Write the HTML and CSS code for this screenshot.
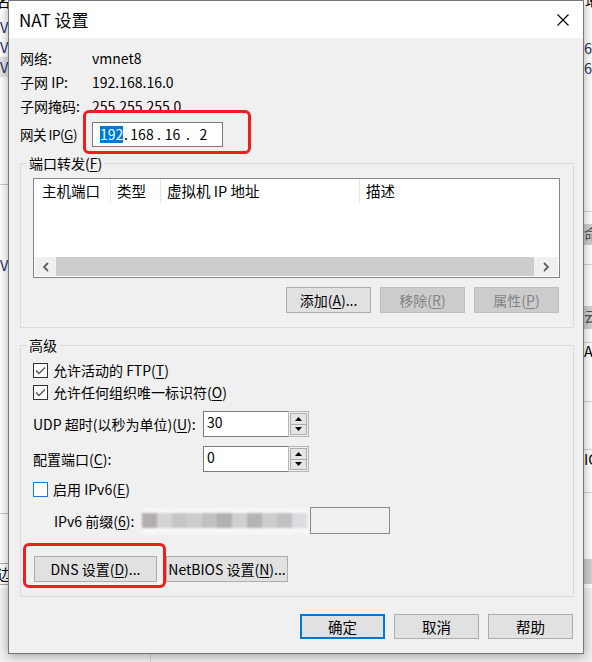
FILE: index.html
```html
<!DOCTYPE html>
<html lang="zh-CN">
<head>
<meta charset="utf-8">
<title>NAT 设置</title>
<link rel="stylesheet" href="styles.css">
</head>
<body>
<div class="desktop">
  <div class="backwin">
    <div class="frag f-ming">名</div>
    <div class="frag f-v1">V</div>
    <div class="frag f-v2">V</div>
    <div class="frag f-hl"></div>
    <div class="frag f-v3">V</div>
    <div class="frag f-line l-209"></div>
    <div class="frag f-v4">V</div>
    <div class="frag f-line l-513"></div>
    <div class="frag f-bian">边</div>
    <div class="frag f-di">地</div>
    <div class="frag f-68a">68</div>
    <div class="frag f-68b">68</div>
    <div class="frag f-rline r-211"></div>
    <div class="frag f-rbox rb-224">命</div>
    <div class="frag f-rline r-264"></div>
    <div class="frag f-rbox rb-306">云</div>
    <div class="frag f-rline r-342"></div>
    <div class="frag f-at">AT</div>
    <div class="frag f-rline r-401"></div>
    <div class="frag f-rline r-449"></div>
    <div class="frag f-ic">IC</div>
    <div class="frag f-rline r-492"></div>
    <div class="frag f-rbox rb-559"></div>
    <div class="frag f-bottom"></div>
  </div>

  <div class="dialog">
    <div class="titlebar">
      <span class="title">NAT 设置</span>
      <svg class="close" width="12" height="12" viewBox="0 0 12 12"><path d="M0.5 0.5 L11.5 11.5 M11.5 0.5 L0.5 11.5" stroke="#000" stroke-width="1.1" fill="none"/></svg>
    </div>
    <div class="content">
      <div class="row r1"><span class="lbl">网络:</span><span>vmnet8</span></div>
      <div class="row"><span class="lbl">子网 IP:</span><span>192.168.16.0</span></div>
      <div class="row"><span class="lbl">子网掩码:</span><span>255.255.255.0</span></div>
      <div class="row gw">
        <span class="lbl gwl">网关 IP(<u>G</u>)</span>
        <div class="ipbox">
          <span class="seg o1"><span class="sel">192</span></span>
          <span class="seg d1">.</span>
          <span class="seg o2">168</span>
          <span class="seg d2">.</span>
          <span class="seg o3">16</span>
          <span class="seg d3">.</span>
          <span class="seg o4">2</span>
        </div>
      </div>

      <div class="group g1">
        <div class="legend">端口转发(<u>F</u>)</div>
        <div class="list">
          <div class="lhead">
            <div class="col c1">主机端口</div>
            <div class="col c2">类型</div>
            <div class="col c3">虚拟机 IP 地址</div>
            <div class="col c4">描述</div>
          </div>
          <div class="lbody"></div>
          <div class="hscroll">
            <div class="sb-btn sb-left"><svg width="8" height="10" viewBox="0 0 8 10"><path d="M6 1 L2 5 L6 9" fill="none" stroke="#606060" stroke-width="1.8"/></svg></div>
            <div class="sb-thumb"></div>
            <div class="sb-btn sb-right"><svg width="8" height="10" viewBox="0 0 8 10"><path d="M2 1 L6 5 L2 9" fill="none" stroke="#606060" stroke-width="1.8"/></svg></div>
          </div>
        </div>
        <div class="btnrow">
          <button class="btn">添加(<u>A</u>)...</button>
          <button class="btn dis">移除(<u>R</u>)</button>
          <button class="btn dis">属性(<u>P</u>)</button>
        </div>
      </div>

      <div class="group g2">
        <div class="legend">高级</div>
        <div class="cbrow cb1">
          <svg class="cb" width="15" height="15" viewBox="0 0 15 15"><rect x="0.5" y="0.5" width="14" height="14" fill="#fff" stroke="#333"/><path d="M3 7.5 L6 10.5 L12 4.5" fill="none" stroke="#555" stroke-width="1.4"/></svg>
          <span>允许活动的 FTP(<u>T</u>)</span>
        </div>
        <div class="cbrow cb2">
          <svg class="cb" width="15" height="15" viewBox="0 0 15 15"><rect x="0.5" y="0.5" width="14" height="14" fill="#fff" stroke="#333"/><path d="M3 7.5 L6 10.5 L12 4.5" fill="none" stroke="#555" stroke-width="1.4"/></svg>
          <span>允许任何组织唯一标识符(<u>O</u>)</span>
        </div>
        <div class="spinrow">
          <span class="slbl">UDP 超时(以秒为单位)(<u>U</u>):</span>
          <div class="tb">30</div>
          <div class="spin">
            <div class="sp"><svg width="7" height="4" viewBox="0 0 7 4"><path d="M0 4 L3.5 0 L7 4Z" fill="#000"/></svg></div>
            <div class="sp"><svg width="7" height="4" viewBox="0 0 7 4"><path d="M0 0 L3.5 4 L7 0Z" fill="#000"/></svg></div>
          </div>
        </div>
        <div class="spinrow">
          <span class="slbl">配置端口(<u>C</u>):</span>
          <div class="tb">0</div>
          <div class="spin">
            <div class="sp"><svg width="7" height="4" viewBox="0 0 7 4"><path d="M0 4 L3.5 0 L7 4Z" fill="#000"/></svg></div>
            <div class="sp"><svg width="7" height="4" viewBox="0 0 7 4"><path d="M0 0 L3.5 4 L7 0Z" fill="#000"/></svg></div>
          </div>
        </div>
        <div class="cbrow cb3">
          <svg class="cb" width="15" height="15" viewBox="0 0 15 15"><rect x="0.5" y="0.5" width="14" height="14" fill="#fff" stroke="#1b78d0"/></svg>
          <span>启用 IPv6(<u>E</u>)</span>
        </div>
        <div class="prefrow">
          <span class="plbl">IPv6 前缀(<u>6</u>):</span>
          <div class="mosaic">
            <div class="blk" style="background:#b3adad"></div>
            <div class="blk" style="background:#d4d4d4"></div>
            <div class="blk" style="background:#c6c6c6"></div>
            <div class="blk" style="background:#cdcdcd"></div>
            <div class="blk" style="background:#c0c0c0"></div>
            <div class="blk" style="background:#b1b1b1"></div>
            <div class="blk" style="background:#d0d0d0"></div>
            <div class="blk" style="background:#b4b4b4"></div>
            <div class="blk" style="background:#cdcdcd"></div>
            <div class="blk" style="background:#c0c0c0"></div>
            <div class="blk" style="background:#dcdce0"></div>
          </div>
          <div class="ptb"></div>
        </div>
        <div class="dnsrow">
          <button class="btn dns">DNS 设置(<u>D</u>)...</button>
          <button class="btn nb">NetBIOS 设置(<u>N</u>)...</button>
        </div>
      </div>

      <div class="footer">
        <button class="btn ok">确定</button>
        <button class="btn">取消</button>
        <button class="btn">帮助</button>
      </div>
    </div>
  </div>

  <div class="mark m1"></div>
  <div class="mark m2"></div>
</div>
</body>
</html>
```

FILE: styles.css
```css
html, body {
  margin: 0;
  padding: 0;
}
body {
  font-family: "Noto Sans CJK SC", "Noto Sans", sans-serif;
  font-size: 14px;
  color: #000;
  background: #fff;
}
u { text-decoration: underline; text-underline-offset: 2px; }

.desktop {
  position: relative;
  width: 592px;
  height: 662px;
  overflow: hidden;
  background: #fff;
}

/* background window fragments (behind the dialog) */
.backwin { position: absolute; inset: 0; }
.frag { position: absolute; line-height: 20px; font-size: 14.5px; }
.f-ming { left: -4px; top: -9px; }
.f-v1 { left: 0; top: 17px; color: #1a2f6e; }
.f-v2 { left: 0; top: 37px; color: #1a2f6e; }
.f-hl { left: 0; top: 57px; width: 8px; height: 20px; background: #e5e5e5; }
.f-v3 { left: 0; top: 57px; color: #1a2f6e; }
.f-line { left: 0; width: 8px; height: 1px; background: #c8c8c8; }
.l-209 { top: 184px; }
.f-v4 { left: 0; top: 255px; color: #1a2f6e; }
.l-513 { top: 513px; }
.f-bian { left: -6px; top: 563px; border: 1px solid #aaa; padding: 0 2px; }
.f-di { left: 585px; top: -9px; }
.f-68a { left: 584px; top: 38px; color: #23355e; }
.f-68b { left: 584px; top: 58px; color: #23355e; }
.f-rline { left: 584px; width: 8px; height: 1px; background: #d4d4d4; }
.r-211 { top: 211px; }
.r-264 { top: 264px; }
.r-342 { top: 342px; }
.r-401 { top: 401px; }
.r-449 { top: 449px; }
.r-492 { top: 492px; }
.f-rbox { left: 584px; width: 10px; background: #d0d0d0; color: #555; overflow: hidden; }
.rb-224 { top: 224px; height: 21px; }
.rb-306 { top: 306px; height: 23px; }
.rb-559 { top: 559px; height: 25px; }
.f-at { left: 584px; top: 341px; }
.f-ic { left: 584px; top: 449px; }
.f-bottom { left: 0; top: 588px; width: 592px; height: 74px; background: #f0f0f0; border-left: 150px solid #f3f3f3; box-sizing: border-box; box-shadow: inset 1px 0 0 #dadada; }

/* dialog window */
.dialog {
  position: absolute;
  left: 8px;
  top: 0;
  width: 576px;
  height: 654px;
  box-sizing: border-box;
  border: 1px solid #777;
  background: #f0f0f0;
  box-shadow: 0 2px 10px rgba(0, 0, 0, 0.35);
  display: flex;
  flex-direction: column;
}
.titlebar {
  flex: none;
  height: 37px;
  background: #fff;
  display: flex;
  align-items: center;
  justify-content: space-between;
  padding: 0 14px 0 10px;
}
.title {
  font-size: 17px;
  line-height: 22px;
}
.close { display: block; }

.content {
  flex: 1;
  display: flex;
  flex-direction: column;
  padding: 7px 9px 0 11px;
}

.row {
  display: flex;
  align-items: center;
  height: 24px;
  line-height: 20px;
}
.r1 { height: 25px; }
.gw { margin-top: 4px; }
.lbl { width: 72px; flex: none; white-space: nowrap; }
.gwl { letter-spacing: -0.5px; font-size: 13.5px; }

.ipbox {
  width: 131px;
  height: 25px;
  box-sizing: border-box;
  border: 1px solid #7a7a7a;
  background: #fff;
  display: flex;
  align-items: center;
  padding-left: 7px;
  line-height: 17px;
}
.seg { display: block; text-align: center; flex: none; }
.o1 { width: 23px; }
.sel { display: block; background: #0078d7; color: #fff; height: 17px; }
.d1 { width: 6px; }
.o2 { width: 26px; }
.d2 { width: 8px; }
.o3 { width: 19px; }
.d3 { width: 12px; }
.o4 { width: 19px; }

/* group boxes */
.group {
  border: 1px solid #dcdcdc;
  margin-top: 17px;
  padding: 0 13px 14px 12px;
}
.legend {
  width: fit-content;
  height: 20px;
  line-height: 20px;
  margin: -11px 0 0 -6px;
  padding: 0 2px;
  background: #f0f0f0;
}

.list {
  margin-top: 5px;
  height: 100px;
  box-sizing: border-box;
  border: 1px solid #828790;
  background: #fff;
  display: flex;
  flex-direction: column;
}
.lhead { display: flex; height: 24px; flex: none; }
.col {
  box-sizing: border-box;
  line-height: 24px;
  padding-left: 6px;
  border-right: 1px solid #e5e5e5;
  white-space: nowrap;
  font-size: 14.5px;
}
.c1 { width: 77px; padding-left: 8px; }
.c2 { width: 50px; }
.c3 { width: 199px; }
.c4 { flex: 1; border-right: none; }
.lbody { flex: 1; }
.hscroll {
  flex: none;
  height: 19px;
  margin: 0 1px 1px 1px;
  display: flex;
}
.sb-btn {
  background: #f0f0f0;
  display: flex;
  align-items: center;
  justify-content: center;
}
.sb-left { width: 21px; }
.sb-right { width: 24px; }
.sb-btn svg { display: block; }
.sb-thumb { flex: 1; background: #cdcdcd; }

.btnrow {
  display: flex;
  justify-content: flex-end;
  gap: 9px;
  margin-top: 9px;
  margin-right: 1px;
}
.btn {
  box-sizing: border-box;
  width: 85px;
  height: 26px;
  border: 1px solid #adadad;
  background: #e1e1e1;
  font: inherit;
  color: #000;
  line-height: 22px;
  padding: 0;
  text-align: center;
  white-space: nowrap;
}
.btn.dis {
  background: #cccccc;
  border-color: #bfbfbf;
  color: #838383;
}

.cbrow {
  display: flex;
  align-items: center;
  gap: 5px;
  height: 20px;
  line-height: 20px;
}
.cb { display: block; flex: none; }
.cb1 { margin-top: 5px; }
.cb2 { margin-top: 2px; }
.cb3 { margin-top: 7px; }

.spinrow {
  display: flex;
  align-items: center;
  margin-top: 9px;
  height: 26px;
}
.slbl { width: 170px; flex: none; line-height: 20px; white-space: nowrap; }
.tb {
  box-sizing: border-box;
  width: 85px;
  height: 26px;
  border: 1px solid #7a7a7a;
  border-right: none;
  background: #fff;
  padding: 1px 3px;
  line-height: 18px;
}
.spin {
  box-sizing: border-box;
  width: 21px;
  height: 26px;
  border: 1px solid #b4b4b4;
  padding: 1px;
  background: #f0f0f0;
  display: flex;
  flex-direction: column;
}
.sp {
  flex: 1;
  border: 1px solid #adadad;
  background: #e5e5e5;
  display: flex;
  align-items: center;
  justify-content: center;
}
.sp + .sp { border-top: none; }
.sp svg { display: block; }

.prefrow {
  display: flex;
  align-items: center;
  margin-top: 8px;
  height: 27px;
}
.plbl {
  box-sizing: border-box;
  width: 109px;
  flex: none;
  padding-left: 21px;
  line-height: 20px;
  white-space: nowrap;
  overflow: hidden;
}
.mosaic {
  width: 166px;
  height: 26px;
  flex: none;
  display: flex;
  align-items: center;
  background: #f7f7f7;
  filter: blur(1px);
}
.blk { width: 15px; height: 15px; flex: none; }
.ptb {
  box-sizing: border-box;
  width: 80px;
  height: 27px;
  margin-left: 2px;
  border: 1px solid #8a8a8a;
  background: #f0f0f0;
}

.dnsrow {
  display: flex;
  gap: 9px;
  margin-top: 22px;
  margin-left: 1px;
}
.dns { width: 123px; }
.nb { width: 122px; }

.footer {
  display: flex;
  justify-content: flex-end;
  gap: 9px;
  margin-top: 17px;
  margin-right: 1px;
}
.footer .btn { height: 25px; font-size: 14.5px; }
.btn.ok {
  border: 2px solid #0078d7;
  line-height: 21px;
}

/* red annotation frames drawn over the screenshot */
.mark {
  position: absolute;
  box-sizing: border-box;
  border: 3px solid #f01e1e;
  border-radius: 6px;
}
.m1 { left: 83px; top: 110px; width: 168px; height: 44px; }
.m2 { left: 23px; top: 543px; width: 143px; height: 45px; }
```
